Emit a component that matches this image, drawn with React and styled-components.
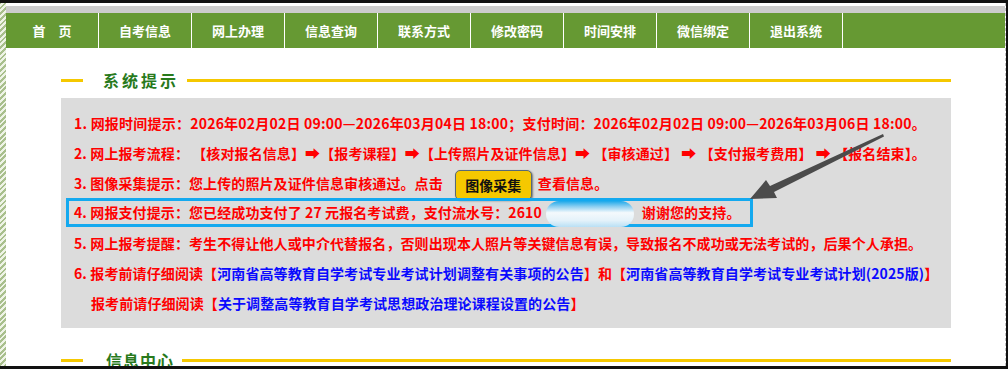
import React from "react";
import styled, {createGlobalStyle} from "styled-components";

const GlobalStyle = createGlobalStyle`
  html, body {
    margin: 0;
    padding: 0;
    background: #fff;
  }

  body {
    font-family: "Noto Sans CJK SC", "Noto Sans", sans-serif;
  }
`;

const Frame = styled.div`
  width: 1008px;
  height: 369px;
  box-sizing: border-box;
  display: flex;
  overflow: hidden;
  background: #fff;
  border-top: 3px solid #111;
  border-right: 2px solid #111;
  border-bottom: 3px solid #111;
`;

const Hatch = styled.div`
  width: 6px;
  flex: none;
  background: repeating-linear-gradient(
    -45deg,
    #a8bf8c 0 2px,
    #eef3e6 2px 4px
  );
`;

const Main = styled.div`
  flex: 1;
  padding-top: 3px;
  border-right: 1px dashed #c4c4c4;
`;

const TopStrip = styled.div`
  height: 7px;
  background: #cccccc;
`;

const Nav = styled.ul`
  display: flex;
  margin: 0;
  padding: 0;
  list-style: none;
  height: 35px;
  background: #669933;
`;

const NavItem = styled.li`
  width: 92px;
  border-right: 1px solid #fff;
  text-align: center;
  line-height: 35px;
  font-size: 13px;
  font-weight: 700;
  color: #fff;
  white-space: pre;
`;

const Content = styled.div`
  margin-left: 55px;
  width: 890px;
`;

const SectionHead = styled.div`
  display: flex;
  align-items: center;
  height: 24px;
  margin-top: 20px;
`;

const ShortLine = styled.span`
  width: 22px;
  height: 3px;
  background: #f5c800;
`;

const LongLine = styled.span`
  flex: 1;
  height: 3px;
  background: #f5c800;
`;

const Title = styled.h3`
  margin: 0 ${(p) => p.$after || 8}px 0 ${(p) => p.$offset || 20}px;
  font-size: 16px;
  font-weight: 700;
  letter-spacing: ${(p) => (p.$tight ? 1 : 3)}px;
  color: #287a1c;
  line-height: 24px;
`;

const Box = styled.div`
  position: relative;
  margin-top: 6px;
  height: 230px;
  box-sizing: border-box;
  padding: 10px 0 10px 13px;
  background: #dcdcdc;
`;

const Line = styled.div`
  height: 30px;
  line-height: 30px;
  padding-left: ${(p) => (p.$indent ? 17 : 0)}px;
  font-size: 14px;
  font-weight: 700;
  letter-spacing: ${(p) => p.$spacing || 0.1}px;
  color: #ff0000;
  white-space: nowrap;
`;

const Step = styled.span`
  display: inline-block;
  font-size: 15px;
`;

const Marked = styled.span`
  display: inline-block;
  box-sizing: border-box;
  width: 687px;
  height: 29px;
  line-height: 23px;
  margin-left: -8px;
  padding-left: 5px;
  border: 3px solid #14a9ef;
  vertical-align: top;
`;

const Smudge = styled.span`
  display: inline-block;
  width: 88px;
  height: 26px;
  margin: 0 8px 0 4px;
  vertical-align: middle;
  border-radius: 13px;
  background: linear-gradient(
    to bottom,
    #1ba8ea 0%,
    #8fd0f2 22%,
    #f4f9fc 45%,
    #e4f2fa 75%,
    #b9e0f5 100%
  );
`;

const Button = styled.button`
  width: 77px;
  height: 30px;
  margin: 0 6px 0 12px;
  padding: 0;
  border: 1px solid #55697a;
  border-radius: 5px;
  background: #f5c800;
  box-shadow: 1px 1px 2px rgba(0, 0, 0, 0.45);
  font-family: inherit;
  font-size: 14px;
  font-weight: 700;
  color: #111;
  vertical-align: middle;
`;

const Notice = styled.a`
  color: #0a0aff;
  text-decoration: none;
`;

const Pointer = styled.svg`
  position: absolute;
  left: 679px;
  top: 32px;
`;

const menu = ["首　页", "自考信息", "网上办理", "信息查询", "联系方式", "修改密码", "时间安排", "微信绑定", "退出系统"];

const App = () => {
    return (
        <>
            <GlobalStyle/>
            <Frame>
                <Hatch/>
                <Main>
                    <TopStrip/>
                    <Nav>
                        {menu.map((item) => (
                            <NavItem key={item}>{item}</NavItem>
                        ))}
                    </Nav>

                    <Content>
                        <SectionHead>
                            <ShortLine/>
                            <Title>系统提示</Title>
                            <LongLine/>
                        </SectionHead>

                        <Box>
                            <Line $spacing={0.22}>
                                1. 网报时间提示：2026年02月02日 09:00—2026年03月04日 18:00；支付时间：2026年02月02日 09:00—2026年03月06日 18:00。
                            </Line>
                            <Line>
                                2. 网上报考流程：&nbsp;【核对报名信息】<Step>➡</Step>【报考课程】<Step>➡</Step>【上传照片及证件信息】<Step>➡</Step> 【审核通过】 <Step>➡</Step> 【支付报考费用】 <Step>➡</Step> 【报名结束】。
                            </Line>
                            <Line>
                                3. 图像采集提示：您上传的照片及证件信息审核通过。点击
                                <Button type="button">图像采集</Button>
                                查看信息。
                            </Line>
                            <Line>
                                <Marked>
                                    4. 网报支付提示：您已经成功支付了 27 元报名考试费，支付流水号：2610
                                    <Smudge/>
                                    谢谢您的支持。
                                </Marked>
                            </Line>
                            <Line>
                                5. 网上报考提醒：考生不得让他人或中介代替报名，否则出现本人照片等关键信息有误，导致报名不成功或无法考试的，后果个人承担。
                            </Line>
                            <Line>
                                6. 报考前请仔细阅读【<Notice href="#">河南省高等教育自学考试专业考试计划调整有关事项的公告</Notice>】和【<Notice href="#">河南省高等教育自学考试专业考试计划(2025版)</Notice>】
                            </Line>
                            <Line $indent>
                                报考前请仔细阅读【<Notice href="#">关于调整高等教育自学考试思想政治理论课程设置的公告</Notice>】
                            </Line>

                            {/* annotation arrow drawn over the notice */}
                            <Pointer width="150" height="75" viewBox="0 0 150 75">
                                <path d="M10 69 L26 50 L30 56 L143 4 L144 6.5 L34 62 L37 68 Z" fill="#4b4b4b"/>
                            </Pointer>
                        </Box>

                        <SectionHead>
                            <ShortLine/>
                            <Title $offset={23} $tight>信息中心</Title>
                            <LongLine/>
                        </SectionHead>
                    </Content>
                </Main>
            </Frame>
        </>
    );
};

export default App;
